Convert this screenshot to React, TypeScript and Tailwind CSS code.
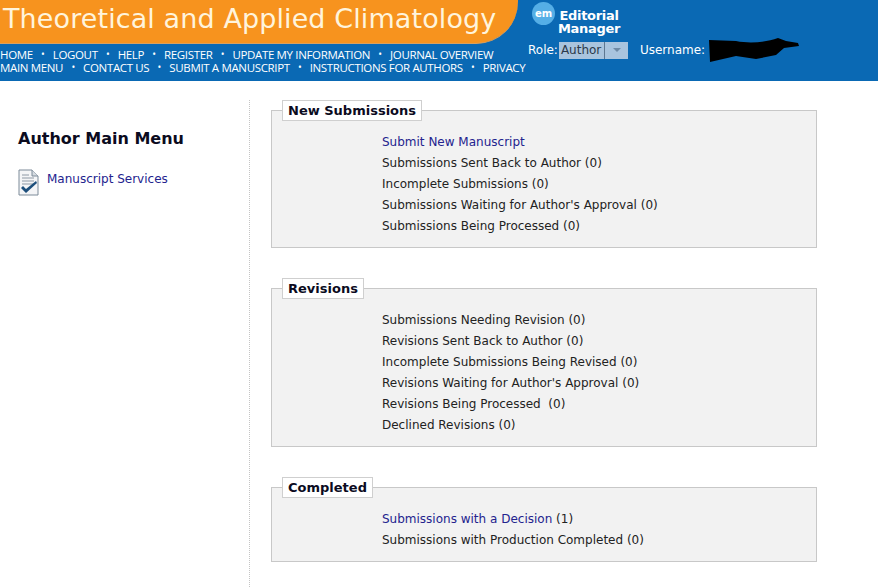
import React from "react";

const navTop = ["HOME", "LOGOUT", "HELP", "REGISTER", "UPDATE MY INFORMATION", "JOURNAL OVERVIEW"];
const navBottom = ["MAIN MENU", "CONTACT US", "SUBMIT A MANUSCRIPT", "INSTRUCTIONS FOR AUTHORS", "PRIVACY"];

const sections = [
  {
    title: "New Submissions",
    rows: [
      { label: "Submit New Manuscript", link: true },
      { label: "Submissions Sent Back to Author (0)" },
      { label: "Incomplete Submissions (0)" },
      { label: "Submissions Waiting for Author's Approval (0)" },
      { label: "Submissions Being Processed (0)" },
    ],
  },
  {
    title: "Revisions",
    rows: [
      { label: "Submissions Needing Revision (0)" },
      { label: "Revisions Sent Back to Author (0)" },
      { label: "Incomplete Submissions Being Revised (0)" },
      { label: "Revisions Waiting for Author's Approval (0)" },
      { label: "Revisions Being Processed  (0)" },
      { label: "Declined Revisions (0)" },
    ],
  },
  {
    title: "Completed",
    rows: [
      { label: "Submissions with a Decision", link: true, count: " (1)" },
      { label: "Submissions with Production Completed (0)" },
    ],
  },
];

const NavLine = ({ items }: { items: string[] }) => (
  <div className="flex h-[13px] items-center whitespace-nowrap font-['Open_Sans',sans-serif] text-[11.5px] leading-[13px] tracking-[-0.35px] text-white">
    {items.map((item, i) => (
      <React.Fragment key={item}>
        {i > 0 && <span className="w-[20px] text-center text-[10px]">•</span>}
        <span>{item}</span>
      </React.Fragment>
    ))}
  </div>
);

const DocIcon = () => (
  <svg width="21" height="27" viewBox="0 0 21 27" className="shrink-0">
    <path d="M1 1H14L20 7V26H1Z" fill="#f4f5f7" stroke="#7d8b99" strokeWidth="1" />
    <path d="M14 1V7H20" fill="#d5dbe1" stroke="#7d8b99" strokeWidth="1" />
    <path d="M4 6H11M4 9H16M4 12H16M4 15H16" stroke="#8e99a5" strokeWidth="1.2" />
    <path d="M3 19L8 24L19 14L18 12L8 20L5 17Z" fill="#1d4f7c" />
  </svg>
);

const Section = ({ title, rows }: (typeof sections)[number]) => (
  <fieldset className="mb-[30px] w-[546px] border border-[#c8c8c8] bg-[#f2f2f2] pb-[10px] pt-[11px]">
    <legend className="ml-[10px] h-[21px] border border-[#cfcfcf] bg-white px-[5px] text-[13px] font-bold leading-[19px] text-[#0b0b1e]">
      {title}
    </legend>
    <ul className="pl-[110px]">
      {rows.map((row) => (
        <li key={row.label} className="h-[21px] whitespace-pre text-[12px] leading-[21px] text-[#222222]">
          <span className={row.link ? "text-[#23238e]" : ""}>{row.label}</span>
          {row.count}
        </li>
      ))}
    </ul>
  </fieldset>
);

export default function App() {
  return (
    <div className="h-[587px] w-[878px] overflow-hidden bg-white font-['DejaVu_Sans',sans-serif]">
      <header className="relative flex h-[81px] bg-[#0a69b4]">
        <div className="flex w-[528px] flex-col">
          <div className="flex h-[44px] w-[518px] items-center rounded-br-[42px] border-b border-[#d9a060] bg-[#f7931e] pl-[3px] pb-[4px]">
            <h1 className="whitespace-nowrap text-[27px] font-normal tracking-[0.1px] text-[#fff4dc]">
              Theoretical and Applied Climatology
            </h1>
          </div>
          <div className="mt-[4px] flex flex-col gap-[0px]">
            <NavLine items={navTop} />
            <NavLine items={navBottom} />
          </div>
        </div>
        <div className="flex flex-col pt-[2px] text-white">
          <div className="flex items-start pl-[4px]">
            <span className="flex h-[23px] w-[23px] items-center justify-center rounded-full bg-[#55aee6] text-[10px] font-bold leading-none">
              em
            </span>
            <span className="-ml-[1px] mt-[7px] w-[70px] text-center text-[13px] font-bold leading-[13px] tracking-[-0.3px]">
              Editorial Manager
            </span>
          </div>
          <div className="mt-[2px] flex items-center text-[12px]">
            <span>Role:</span>
            <span className="ml-[1px] flex h-[17px] w-[69px] items-center bg-[#a9c4de] pl-[2px] text-[#2b3a4a]">
              Author
              <span className="ml-[3px] flex h-full flex-1 items-center justify-center border-l border-[#5d7791]">
                <span className="h-0 w-0 border-x-[4px] border-t-[4px] border-x-transparent border-t-[#6f8aa5]" />
              </span>
            </span>
            <span className="ml-[12px]">Username:</span>
            <svg width="94" height="26" viewBox="0 0 94 26" className="ml-[1px]">
              <path d="M3 3L30 4C45 7 60 5 72 1L80 4L92 6L93 9L78 11L70 18L50 22L30 19L4 25Z" fill="#000000" />
            </svg>
          </div>
        </div>
      </header>
      <div className="flex pt-[19px]">
        <aside className="h-[487px] w-[250px] border-r border-dotted border-[#c4c4c4] pl-[18px] pt-[29px]">
          <h2 className="text-[16px] font-bold leading-[20px] text-[#0b0b1e]">Author Main Menu</h2>
          <div className="mt-[20px] flex items-start gap-[8px]">
            <DocIcon />
            <a className="pt-[1px] text-[12px] leading-[18px] text-[#23238e]">Manuscript Services</a>
          </div>
        </aside>
        <main className="pl-[21px]">
          {sections.map((s) => (
            <Section key={s.title} {...s} />
          ))}
        </main>
      </div>
    </div>
  );
}
